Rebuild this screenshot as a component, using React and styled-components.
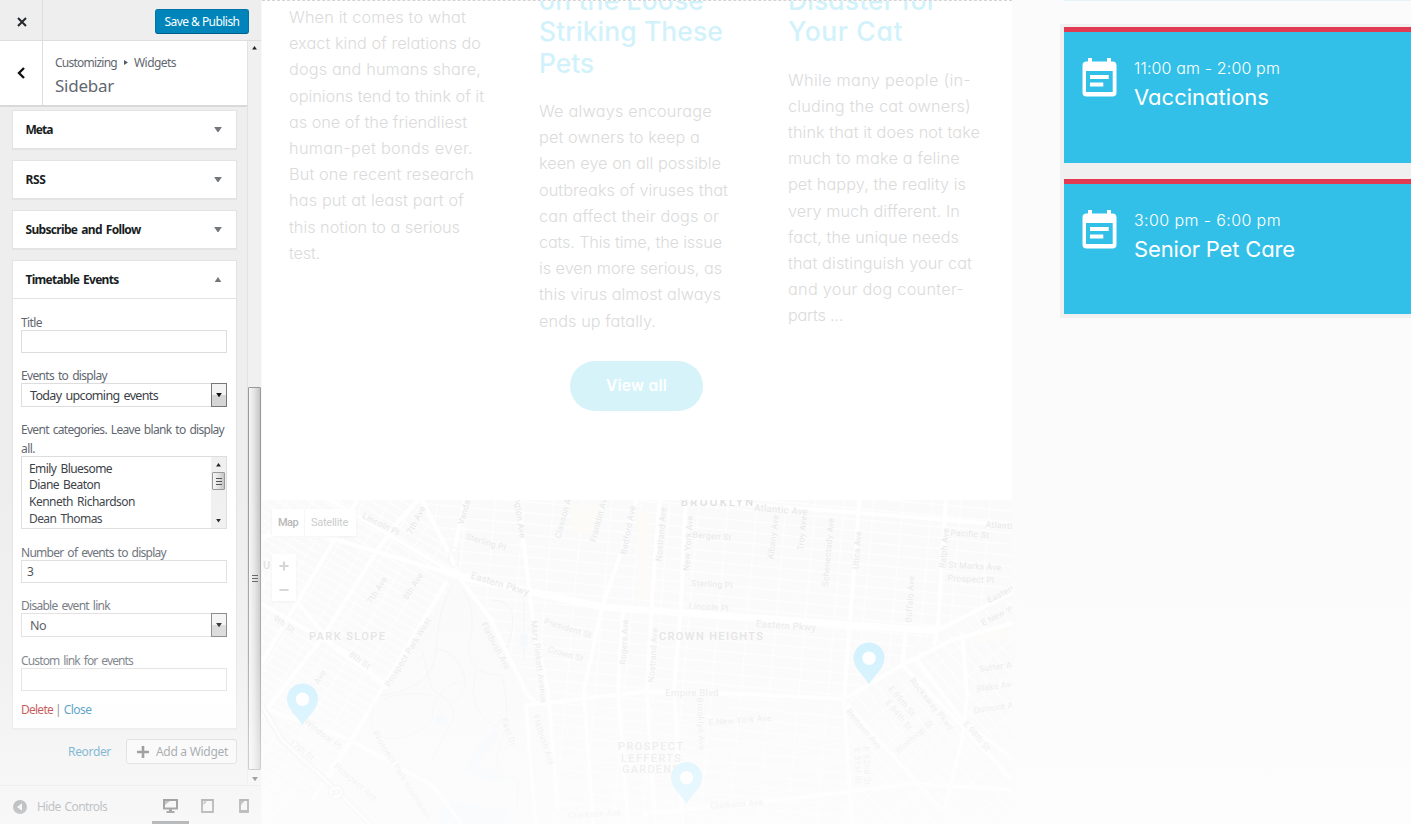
import React, { useLayoutEffect, useRef, useState } from 'react';
import styled, { createGlobalStyle, css } from 'styled-components';

const UI = '"Noto Sans", "Open Sans", sans-serif';
const GEO = 'Inter, "Open Sans", sans-serif';

const GlobalStyle = createGlobalStyle`
  *, *::before, *::after { box-sizing: border-box; }
  body { margin: 0; overflow: hidden; background: #fcfcfc; font-family: ${UI}; }
`;

/* ---------- text that is tracked to a given measure ---------- */
const FitSpan = styled.span`
  display: inline-block;
  white-space: pre;
`;

function Fit({ w, children }) {
  const ref = useRef(null);
  const [spacing, setSpacing] = useState(0);
  useLayoutEffect(() => {
    const natural = ref.current.getBoundingClientRect().width;
    setSpacing((w - natural) / Math.max(1, String(children).length));
  }, [w, children]);
  return (
    <FitSpan ref={ref} style={{ letterSpacing: `${spacing}px` }}>
      {children}
    </FitSpan>
  );
}

/* ---------- page ---------- */
const Page = styled.div`
  position: relative;
  display: grid;
  grid-template-columns: 262px 750px 399px;
  width: 1411px;
  height: 824px;
  overflow: hidden;
`;

const Fade = styled.div`
  position: absolute;
  inset: 0;
  pointer-events: none;
  background: linear-gradient(
    rgba(253, 253, 253, 0) 480px,
    rgba(253, 253, 253, 0.22) 660px,
    rgba(253, 253, 253, 0.36) 710px,
    rgba(253, 253, 253, 0.5) 752px,
    rgba(253, 253, 253, 0.6) 806px,
    rgba(253, 253, 253, 0.68) 824px
  );
`;

/* ---------- customizer ---------- */
const Customizer = styled.aside`
  display: flex;
  flex-direction: column;
  height: 824px;
  background: #eee;
  border-right: 1px solid #f8f8f8;
  color: #5f676f;
  font-size: 12px;
  word-spacing: 1.5px;
`;

const TopBar = styled.header`
  display: flex;
  align-items: center;
  justify-content: space-between;
  height: 41px;
  padding-right: 12px;
  border-bottom: 1px solid #dcdfe1;
`;

const CloseButton = styled.button`
  display: grid;
  place-items: center;
  width: 43px;
  height: 40px;
  padding: 3px 0 0 1px;
  border: 0;
  border-right: 1px solid #dcdfe1;
  background: none;
`;

const PublishButton = styled.button`
  width: 94px;
  height: 25px;
  margin-top: 3px;
  padding: 0;
  border: 1px solid #0073aa;
  border-bottom-color: #005e8c;
  border-radius: 3px;
  background: #0085ba;
  color: #fff;
  font: 12px/23px ${UI};
`;

const Scroller = styled.div`
  display: flex;
  height: 744px;
`;

const Panel = styled.div`
  flex: none;
  width: 248px;
  border-right: 1px solid #e2e2e2;
`;

const PanelHead = styled.div`
  display: flex;
  height: 66px;
  background: #fff;
  border-bottom: 2px solid #d9d9d9;
`;

const BackButton = styled.button`
  display: grid;
  place-items: center;
  width: 43px;
  padding: 0;
  border: 0;
  border-right: 1px solid #ddd;
  background: none;
`;

const Crumbs = styled.div`
  display: flex;
  flex-direction: column;
  padding: 12px 0 0 12px;
`;

const CrumbRow = styled.div`
  display: flex;
  align-items: center;
  gap: 6.5px;
  height: 18px;
`;

const PanelTitle = styled.div`
  height: 28px;
  font-size: 17px;
  line-height: 29px;
`;

const Widgets = styled.div`
  display: flex;
  flex-direction: column;
  gap: 11px;
  padding: 3px 10px 0 12px;
`;

const WidgetBox = styled.section`
  border: 1px solid #e3e3e3;
  background: #fff;
  box-shadow: 0 1px 1px rgba(0, 0, 0, 0.04);
`;

const WidgetTop = styled.div`
  display: flex;
  align-items: center;
  justify-content: space-between;
  height: 37px;
  padding: 0 14px 0 12.5px;
  color: #191e23;
  font-weight: 700;
`;

const WidgetBody = styled.div`
  display: flex;
  flex-direction: column;
  height: 430px;
  padding: 14px 8px 0;
  border-top: 1px solid #e3e3e3;
`;

const Field = styled.div`
  display: flex;
  flex-direction: column;
  margin-bottom: ${(p) => p.$gap || 13}px;
`;

const Label = styled.label`
  display: block;
  margin-bottom: -2px;
  line-height: 19px;
`;

const controlBox = css`
  width: 206px;
  border: 1px solid #ddd;
  background: #fff;
  color: #3c4146;
`;

const Input = styled.div`
  ${controlBox}
  height: 23px;
  padding-left: 5px;
  line-height: 22px;
`;

const Select = styled.div`
  ${controlBox}
  display: flex;
  justify-content: space-between;
  height: 24px;
  padding-left: 8px;
  font-size: 12.5px;
  line-height: 24px;
`;

const DropButton = styled.span`
  display: grid;
  place-items: center;
  width: 16px;
  height: 24px;
  margin: -1px -1px 0 0;
  border: 1px solid #777;
  background: linear-gradient(#f3f3f3 50%, #d5d5d5 50%);
`;

const ListBox = styled.div`
  ${controlBox}
  display: flex;
  justify-content: space-between;
  height: 73px;
`;

const Options = styled.div`
  display: flex;
  flex-direction: column;
  align-items: flex-start;
  padding: 3.5px 0 0 7px;
  line-height: 16.7px;
`;

const Track = styled.div`
  display: flex;
  flex-direction: column;
  align-items: center;
  width: ${(p) => p.$w}px;
  padding: ${(p) => p.$pad};
  background: #f0f0f0;
`;

const Thumb = styled.div`
  display: grid;
  place-items: center;
  width: 100%;
  height: ${(p) => p.$h}px;
  margin: ${(p) => p.$top}px 0 auto;
  border: 1px solid #999;
  border-radius: 1px;
  background: linear-gradient(90deg, #f6f6f6, #e3e3e3 50%, #c4c4c4);
`;

const Links = styled.div`
  display: flex;
  gap: 2px;
  margin-top: -4px;
  line-height: 19px;
  color: #555;
`;

const Link = styled.a`
  color: ${(p) => (p.$danger ? '#a00' : '#0073aa')};
`;

const WidgetActions = styled.div`
  display: flex;
  align-items: center;
  justify-content: flex-end;
  gap: 15px;
  padding: 10px 10px 0 0;
`;

const AddButton = styled.button`
  display: flex;
  align-items: center;
  gap: 7px;
  width: 111px;
  height: 25px;
  padding: 0 0 0 10px;
  border: 1px solid #c8c8c8;
  border-radius: 3px;
  background: #f7f7f7;
  color: #555d66;
  font: 12px/22px ${UI};
`;

const Footer = styled.footer`
  display: flex;
  height: 39px;
  border-top: 1px solid #ddd;
`;

const Collapse = styled.div`
  display: flex;
  flex: none;
  align-items: center;
  gap: 10px;
  width: 152px;
  padding: 3px 0 0 13px;
`;

const Device = styled.div`
  display: grid;
  flex: none;
  place-items: center;
  width: 36.8px;
  height: 38px;
  padding-top: 4px;
  border-bottom: 3px solid ${(p) => (p.$active ? '#2c3035' : 'transparent')};
`;

function Arrow({ up, size = 8, fill = '#72777c' }) {
  const h = size * 0.72;
  return (
    <svg width={size} height={h} viewBox="0 0 8 6">
      <path d={up ? 'M0 6 4 0l4 6z' : 'M0 0h8L4 6z'} fill={fill} />
    </svg>
  );
}

function Grip() {
  return (
    <svg width="6" height="8">
      <path d="M0 1.5h6M0 4.5h6M0 7.5h6" stroke="#555" />
    </svg>
  );
}

function CollapsedWidget({ title, w }) {
  return (
    <WidgetBox>
      <WidgetTop><Fit w={w}>{title}</Fit><Arrow /></WidgetTop>
    </WidgetBox>
  );
}

function CustomizerPane() {
  return (
    <Customizer>
      <TopBar>
        <CloseButton>
          <svg width="10" height="10"><path d="m1 1 8 8M9 1 1 9" stroke="#23282d" strokeWidth="2" /></svg>
        </CloseButton>
        <PublishButton><Fit w={75}>Save &amp; Publish</Fit></PublishButton>
      </TopBar>
      <Scroller>
        <Panel>
          <PanelHead>
            <BackButton>
              <svg width="8" height="12"><path d="M7 1 2 6l5 5" fill="none" stroke="#111" strokeWidth="2.4" /></svg>
            </BackButton>
            <Crumbs>
              <CrumbRow>
                <Fit w={62}>Customizing</Fit>
                <svg width="4" height="5"><path d="M0 0l4 2.5L0 5z" fill="#555d66" /></svg>
                <Fit w={42}>Widgets</Fit>
              </CrumbRow>
              <PanelTitle><Fit w={59}>Sidebar</Fit></PanelTitle>
            </Crumbs>
          </PanelHead>
          <Widgets>
            <CollapsedWidget title="Meta" w={27} />
            <CollapsedWidget title="RSS" w={20} />
            <CollapsedWidget title="Subscribe and Follow" w={115} />
            <WidgetBox>
              <WidgetTop><Fit w={93}>Timetable Events</Fit><Arrow up /></WidgetTop>
              <WidgetBody>
                <Field><Label><Fit w={21}>Title</Fit></Label><Input /></Field>
                <Field>
                  <Label><Fit w={86}>Events to display</Fit></Label>
                  <Select><Fit w={128}>Today upcoming events</Fit><DropButton><Arrow size={6} fill="#111" /></DropButton></Select>
                </Field>
                <Field $gap={14}>
                  <Label><Fit w={203}>Event categories. Leave blank to display</Fit><br /><Fit w={14}>all.</Fit></Label>
                  <ListBox>
                    <Options>
                      <Fit w={83}>Emily Bluesome</Fit>
                      <Fit w={71}>Diane Beaton</Fit>
                      <Fit w={106}>Kenneth Richardson</Fit>
                      <Fit w={73}>Dean Thomas</Fit>
                    </Options>
                    <Track $w={15} $pad="6px 1px 5px">
                      <Arrow up size={5} fill="#222" />
                      <Thumb $h={18} $top={5}><Grip /></Thumb>
                      <Arrow size={5} fill="#222" />
                    </Track>
                  </ListBox>
                </Field>
                <Field><Label><Fit w={145}>Number of events to display</Fit></Label><Input>3</Input></Field>
                <Field $gap={14}>
                  <Label><Fit w={89}>Disable event link</Fit></Label>
                  <Select><Fit w={16}>No</Fit><DropButton><Arrow size={6} fill="#111" /></DropButton></Select>
                </Field>
                <Field><Label><Fit w={112}>Custom link for events</Fit></Label><Input /></Field>
                <Links><Link $danger><Fit w={32}>Delete</Fit></Link><span>|</span><Link><Fit w={28}>Close</Fit></Link></Links>
              </WidgetBody>
            </WidgetBox>
          </Widgets>
          <WidgetActions>
            <Link><Fit w={43}>Reorder</Fit></Link>
            <AddButton>
              <svg width="12" height="12"><path d="M6 0v12M0 6h12" stroke="#444" strokeWidth="2.6" /></svg>
              <Fit w={72}>Add a Widget</Fit>
            </AddButton>
          </WidgetActions>
        </Panel>
        <Track $w={13} $pad="5px 0 4px">
          <Arrow up size={5} fill="#222" />
          <Thumb $h={383} $top={337}><Grip /></Thumb>
          <Arrow size={6} fill="#333" />
        </Track>
      </Scroller>
      <Footer>
        <Collapse>
          <svg width="14" height="14"><circle cx="7" cy="7" r="7" fill="#656b70" /><path d="M9 3.3v7.4L4 7z" fill="#eee" /></svg>
          <Fit w={70}>Hide Controls</Fit>
        </Collapse>
        <Device $active>
          <svg width="15" height="14"><path d="M1 1h13v8.5H1z" fill="none" stroke="#222" strokeWidth="2" /><path d="M2 6V2h5z" fill="#777" /><path d="M6 10h3v2H6zM3.5 12h8v2h-8z" fill="#222" /></svg>
        </Device>
        <Device>
          <svg width="13" height="14"><path d="M1 1h11v12H1z" fill="none" stroke="#555" strokeWidth="1.8" /><path d="M2.5 6V2.5H6z" fill="#777" /></svg>
        </Device>
        <Device>
          <svg width="10" height="14"><path d="M1 1h8v12H1z" fill="none" stroke="#555" strokeWidth="1.8" /><path d="M2 6V2h3.5z" fill="#777" /><path d="M1 11h8v2H1z" fill="#555" /></svg>
        </Device>
      </Footer>
    </Customizer>
  );
}

/* ---------- site preview ---------- */
const Preview = styled.main`
  display: flex;
  flex-direction: column;
  height: 824px;
  background: #fff;
  font-family: ${GEO};
  font-feature-settings: 'cv11';
`;

const Posts = styled.section`
  display: grid;
  grid-template-columns: 250px 249px 224px;
  height: 360.5px;
  padding-left: 27px;
  overflow: hidden;
  border-top: 1px dashed #d4d4d4;
`;

const Post = styled.article`
  display: flex;
  flex-direction: column;
  padding-top: ${(p) => p.$top || 0}px;
`;

const PostTitle = styled.h2`
  display: flex;
  flex-direction: column;
  align-items: flex-start;
  margin: -16.5px 0 19px;
  color: #d2f2fb;
  font-size: 26.5px;
  font-weight: 500;
  line-height: 31.5px;
`;

const Copy = styled.div`
  display: flex;
  flex-direction: column;
  align-items: flex-start;
  color: #dbdbdb;
  font-size: 16.3px;
  font-weight: 300;
  line-height: 26.2px;
`;

const ViewAll = styled.button`
  align-self: center;
  width: 133px;
  height: 50.5px;
  margin: 0 1px 89px 0;
  padding: 0;
  border: 0;
  border-radius: 26px;
  background: #d6f3fa;
  color: #fff;
  font: 600 15.5px/50px ${GEO};
  font-feature-settings: 'cv11';
`;

const POSTS = [
  {
    top: 3,
    copy: [['When it comes to what', 177], ['exact kind of relations do', 192], ['dogs and humans share,', 192], ['opinions tend to think of it', 195], ['as one of the friendliest', 178], ['human-pet bonds ever.', 184], ['But one recent research', 185], ['has put at least part of', 175], ['this notion to a serious', 171], ['test.', 31]],
  },
  {
    title: [['on the Loose', 165], ['Striking These', 184], ['Pets', 55]],
    copy: [['We always encourage', 173], ['pet owners to keep a', 161], ['keen eye on all possible', 182], ['outbreaks of viruses that', 189], ['can affect their dogs or', 180], ['cats. This time, the issue', 183], ['is even more serious, as', 183], ['this virus almost always', 182], ['ends up fatally.', 117]],
  },
  {
    title: [['Disaster for', 149], ['Your Cat', 115]],
    copy: [['While many people (in-', 183], ['cluding the cat owners)', 183], ['think that it does not take', 192], ['much to make a feline', 172], ['pet happy, the reality is', 178], ['very much different. In', 172], ['fact, the unique needs', 171], ['that distinguish your cat', 184], ['and your dog counter-', 176], ['parts ...', 55]],
  },
];

const lines = (rows) => rows.map(([t, w]) => <Fit key={t} w={w}>{t}</Fit>);

/* ---------- map ---------- */
const MapArea = styled.section`
  position: relative;
  height: 324px;
  background: #fafafa;
  overflow: hidden;
`;

const MapSvg = styled.svg`
  display: block;
  font-family: Roboto, sans-serif;
`;

const MapTypes = styled.div`
  position: absolute;
  left: 10px;
  top: 9px;
  display: flex;
  width: 84px;
  height: 27px;
  background: #fff;
  box-shadow: 0 1px 3px rgba(0, 0, 0, 0.05);
  font: 11px/28px Roboto, sans-serif;
  color: #ccc;
`;

const MapType = styled.span`
  padding: 0 6px;
  font-weight: ${(p) => (p.$on ? 500 : 400)};
  color: ${(p) => (p.$on ? '#b4b4b4' : '#cacaca')};
  border-right: ${(p) => (p.$on ? '1px solid #f6f6f6' : '0')};
`;

const ZoomBox = styled.div`
  position: absolute;
  left: 10px;
  top: 54px;
  display: grid;
  place-items: center;
  width: 24px;
  height: 47px;
  background: #fff;
  box-shadow: 0 1px 3px rgba(0, 0, 0, 0.05);
`;

const MAJOR = [
  'M-5 170 84 20 98-5', 'M-5 222 60 138 118 46 136 22 160-5', 'M0 36 62 36 196 76', 'M60-5 196 76',
  'M160 0 188 55 196 76 228 118 266 196 278 205', 'M204-5 192 50', 'M196 76 260 88 340 107 450 115 540 121 675 131 755 90',
  'M185 82 119 190 63 285', 'M256-5 272 130 286 190 296 310', 'M265 205 380 192 460 193 582 199 640 165 690 140 755 122',
  'M376-5 360 50 340 107 322 190 331 324', 'M361 110 356 190 366 324', 'M398-5 390 100 385 190 393 324',
  'M424-5 419 105 412 190 421 324', 'M380-5 480 4 600 13 755 26', 'M598-5 588 120 582 200 590 324',
  'M684-5 676 125 672 145', 'M644 132 640 165 680 205 755 285', 'M264 205 274 330', 'M585 205 680 310',
  'M700 133 705 195 700 240 682 310', 'M0 207 88 240 170 285 200 324', 'M34 100 75 150 125 185', 'M0 104 88 155 125 188',
  'M380 314 500 302 650 284 755 290', 'M655 160 700 220 755 262', 'M88 240 50 300',
];
const PARK = [
  'M190 85Q176 110 174 150T115 196Q100 235 125 238T170 220Q170 190 200 180',
  'M200 90Q215 105 208 140T240 175Q250 220 238 245T255 280Q260 310 245 324',
  'M174 150Q190 148 200 170T188 205M215 170Q205 200 222 218T238 215',
  'M160 150 170 190Q200 205 188 225T170 260M120 200Q140 190 170 195',
  'M230 100Q255 100 250 130T230 150M262 100V160',
];
const LABELS = [
  ['Lincoln Pl', 119, 24, 27], ['7th Ave', 154, 20, -62], ['Vanda', 202, 12, -75], ['ngton Ave', 258, 18, 82], ['Sterling Pl', 224, 42, 17],
  ['Eastern Pkwy', 238, 84, 17, 9.5], ['7th Ave', 115, 90, -57], ['8th Ave', 151, 86, -57], ['9th St', 22, 124, 34], ['8th St', 98, 160, 36],
  ['Prospect Park West', 146, 152, -58], ['Flatbush Ave', 234, 146, 62], ['Mary Pinkett Avenue', 277, 162, 83], ['President St', 306, 128, 17],
  ['Crown St', 304, 154, 16], ['Rogers Ave', 362, 142, -87], ['Classon Ave', 302, 14, -75], ['Franklin Ave', 337, 18, -75], ['Bedford Ave', 366, 30, -79],
  ['Ave', 58, 177, -57], ['Windsor Pl', 61, 234, 37], ['17th St', 40, 250, 37], ['Prospect Ave', 94, 282, 40], ['Prospect Park Southwest', 140, 275, 58],
  ['East Dr', 247, 232, 70], ['Flatbush Ave', 282, 240, 72], ['Clarkson Ave', 333, 314, -4], ['Nostrand Ave', 399, 34, -85], ['New York Ave', 426, 43, -86],
  ['Bergen St', 450, 36, 4], ['Atlantic Ave', 519, 10, 5, 9.5], ['Albany Ave', 511, 37, -83], ['Troy Ave', 540, 33, -84], ['Schenectady Ave', 566, 52, -85],
  ['Utica Ave', 595, 50, -85], ['Ralph Ave', 682, 48, -85], ['Buffalo Ave', 648, 99, -86], ['Pacific St', 708, 34, 4], ['Atlantic Ave', 748, 26, 4],
  ['St Marks Ave', 713, 66, 3], ['Prospect Pl', 709, 79, 3], ['Sterling Pl', 450, 84, 3], ['Lincoln Pl', 447, 107, 4], ['Eastern Pkwy', 524, 126, 4, 9.5],
  ['Nostrand Ave', 391, 155, -86], ['Empire Blvd', 430, 193, 0, 9.5], ['Brooklyn Ave', 439, 224, 88], ['E New York Ave', 478, 220, -4], ['Remsen Ave', 602, 229, 50],
  ['E 95th St', 640, 201, 50], ['E 94th St', 637, 215, 50], ['Rockaway Pkwy', 670, 204, 51], ['E 98th St', 715, 236, 50], ['Winthrop St', 652, 237, -41],
  ['E 52nd St', 605, 266, 88], ['E 51st St', 596, 266, 88], ['Clarkson Ave', 475, 304, -4], ['Eastern Pkwy', 750, 88, -27], ['E New York', 740, 113, -27],
  ['Sutter Ave', 738, 166, -8], ['Blake Ave', 734, 186, -8], ['Dumont Ave', 736, 207, -8],
];
const AREAS = [
  ['PARK SLOPE', 47, 140, 76], ['CROWN HEIGHTS', 397, 140, 104], ['BROOKLYN', 419, 5.5, 72],
  ['PROSPECT', 356, 250, 65], ['LEFFERTS', 359, 262, 60], ['GARDENS', 360, 273, 57], ['U', 1, 69, 7],
];

function Pin({ x, y }) {
  return (
    <g transform={`translate(${x} ${y})`}>
      <path fill="#c9effe" d="M0 42C-4 34-15.5 26-15.5 15.5a15.5 15.5 0 0 1 31 0C15.5 26 4 34 0 42z" />
      <circle cy="15.7" r="6.7" fill="#fff" />
    </g>
  );
}

function StreetMap() {
  return (
    <MapArea>
      <MapSvg width="750" height="324">
        <defs>
          <pattern id="slope" width="22" height="8" patternUnits="userSpaceOnUse" patternTransform="rotate(31)">
            <path d="M0 .5h22M.5 0v8" stroke="#fefefe" strokeWidth="1.3" />
          </pattern>
          <pattern id="grid" width="29" height="11" patternUnits="userSpaceOnUse" patternTransform="rotate(5)">
            <path d="M0 .5h29M.5 0v11" stroke="#fefefe" strokeWidth="1.3" />
          </pattern>
          <pattern id="diag" width="28" height="11" patternUnits="userSpaceOnUse" patternTransform="rotate(50)">
            <path d="M0 .5h28M.5 0v11" stroke="#fefefe" strokeWidth="1.3" />
          </pattern>
        </defs>
        <path d="M0 0h160l36 76L62 285 0 324z" fill="url(#slope)" />
        <path d="M160 0h590v90l-75 41-90 68-300 8-89-131z" fill="url(#grid)" />
        <path d="M285 207h300v117H285z" fill="url(#grid)" />
        <path d="M585 199 750 90v234H585z" fill="url(#diag)" />
        <path d="M310 5h26l-6 28h-20zM375 10h12v90h-12zM705 135l45-8v10l-45 7z" fill="#fcfbf8" />
        <path d="M176 306q20-6 42 0 10 8 26 0l4 18h-72zM172 220q5-8 12-3 4 8-5 8-6 0-7-5zM205 270q10-30 28-40 8 5 0 12-12 12-16 26 22 0 28 12-18 4-40-10zM258 134h8v12h-8z" fill="#f4f8fc" />
        <g fill="none" stroke="#f4f4f4" strokeWidth="1">{PARK.map((d) => <path key={d} d={d} />)}</g>
        <g fill="none" stroke="#fff" strokeWidth="4">{MAJOR.map((d) => <path key={d} d={d} />)}</g>
        <path d="M196 76 340 107 450 115 675 131" fill="none" stroke="#fff" strokeWidth="7" />
        <path d="M0 206 20 240 74 290 112 328" fill="none" stroke="#f1f1f1" strokeWidth="6" />
        <path d="M0 206 20 240 74 290 112 328" fill="none" stroke="#fdfdfd" strokeWidth="3.5" />
        <ellipse cx="192" cy="57" rx="5" ry="10" fill="none" stroke="#f5f5f5" />
        <circle cx="74" cy="292" r="7" fill="#fff" stroke="#eee" />
        <text x="74" y="295" textAnchor="middle" fontSize="8" fill="#dedede">27</text>
        <g fill="#e6e6e6" stroke="#fcfcfc" strokeWidth="1.5" paintOrder="stroke" textAnchor="middle">
          {LABELS.map(([t, x, y, r, s], i) => (
            <text key={i} transform={`translate(${x} ${y}) rotate(${r})`} y="3" fontSize={s || 8.5} letterSpacing=".3">{t}</text>
          ))}
        </g>
        <g fill="#dfdfdf" fontSize="11" fontWeight="500">
          {AREAS.map(([t, x, y, w]) => <text key={t} x={x} y={y} textLength={w}>{t}</text>)}
        </g>
        <Pin x={40.5} y={183.5} />
        <Pin x={607} y={142.5} />
        <Pin x={424.5} y={262} />
      </MapSvg>
      <MapTypes><MapType $on><Fit w={20}>Map</Fit></MapType><MapType><Fit w={37}>Satellite</Fit></MapType></MapTypes>
      <ZoomBox>
        <svg width="10" height="34"><path d="M5 .5v9M.5 5h9M.5 29h9" stroke="#d2d2d2" strokeWidth="2.2" /></svg>
      </ZoomBox>
    </MapArea>
  );
}

function PreviewPane() {
  return (
    <Preview>
      <Posts>
        {POSTS.map((p, i) => (
          <Post key={i} $top={p.top}>
            {p.title && <PostTitle>{lines(p.title)}</PostTitle>}
            <Copy>{lines(p.copy)}</Copy>
          </Post>
        ))}
      </Posts>
      <ViewAll><Fit w={61}>View all</Fit></ViewAll>
      <StreetMap />
    </Preview>
  );
}

/* ---------- upcoming events ---------- */
const EventsColumn = styled.aside`
  height: 824px;
  padding: 24px 0 0 48px;
  background: linear-gradient(#e6f3fb, #e6f3fb) 52px 0 / 347px 1px no-repeat, #fbfbfb;
  font-family: ${GEO};
  font-feature-settings: 'cv11';
`;

const EventList = styled.div`
  display: flex;
  flex-direction: column;
  gap: 16px;
  height: 294px;
  padding: 3px 0 4px 4px;
  background: #f0f0f0;
`;

const EventCard = styled.article`
  display: flex;
  gap: 17px;
  height: ${(p) => p.$h}px;
  padding: 26px 0 0 18px;
  border-top: 5px solid #e03b50;
  background: #33c0e8;
  color: #fff;
`;

const EventText = styled.div`
  display: flex;
  flex-direction: column;
`;

const EventTime = styled.div`
  height: 20px;
  font-size: 16px;
  font-weight: 300;
  line-height: 20px;
`;

const EventName = styled.div`
  height: 38px;
  font-size: 22px;
  font-weight: 400;
  line-height: 38px;
`;

function EventItem({ h, time, tw, name, nw }) {
  return (
    <EventCard $h={h}>
      <svg width="35" height="39">
        <path fillRule="evenodd" fill="#fff" d="M6 0h4v3.5h15V0h4v3.5h1.500a4 4 0 0 1 4 4v27a4 4 0 0 1-4 4h-26a4 4 0 0 1-4-4v-27a4 4 0 0 1 4-4H6zM4 13v21h26.700V13z" />
        <path d="M8 17h18.700v4H8zM8 24.500h13.300v4H8z" fill="#fff" />
      </svg>
      <EventText>
        <EventTime><Fit w={tw}>{time}</Fit></EventTime>
        <EventName><Fit w={nw}>{name}</Fit></EventName>
      </EventText>
    </EventCard>
  );
}

export default function App() {
  return (
    <Page>
      <GlobalStyle />
      <CustomizerPane />
      <PreviewPane />
      <EventsColumn>
        <EventList>
          <EventItem h={136} time="11:00 am - 2:00 pm" tw={146} name="Vaccinations" nw={135} />
          <EventItem h={135} time="3:00 pm - 6:00 pm" tw={147} name="Senior Pet Care" nw={161} />
        </EventList>
      </EventsColumn>
      <Fade />
    </Page>
  );
}
